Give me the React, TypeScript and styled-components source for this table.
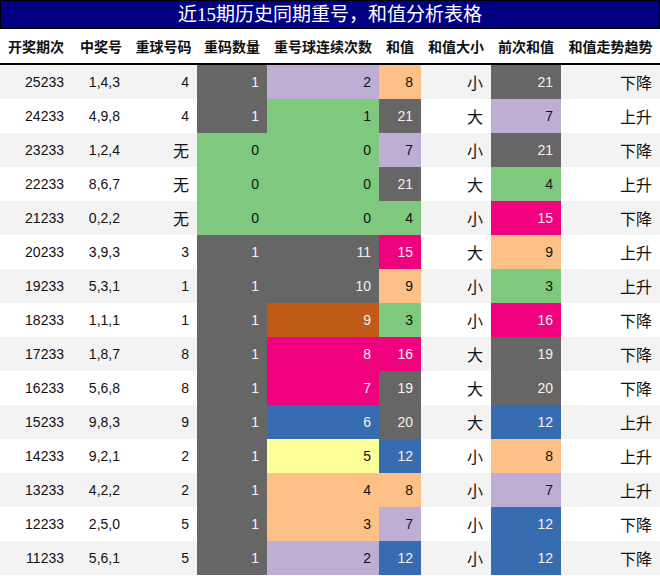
import styled, { createGlobalStyle } from "styled-components";

const GlobalStyle = createGlobalStyle`
  html, body {
    margin: 0;
    padding: 0;
    background: #ffffff;
  }
`;

const C = {
  gray: "#666666",
  green: "#7fc97f",
  purple: "#beaed4",
  orange: "#fdc086",
  yellow: "#ffff99",
  blue: "#386cb0",
  pink: "#f0027f",
  brown: "#bf5b17",
};

const darkColors = [C.gray, C.blue, C.pink, C.brown];

type Row = {
  issue: string;
  nums: string;
  repeat: string;
  count: [string, string];
  streak: [string, string];
  sum: [string, string];
  size: string;
  prev: [string, string];
  trend: string;
};

const rows: Row[] = [
  { issue: "25233", nums: "1,4,3", repeat: "4", count: ["1", C.gray], streak: ["2", C.purple], sum: ["8", C.orange], size: "小", prev: ["21", C.gray], trend: "下降" },
  { issue: "24233", nums: "4,9,8", repeat: "4", count: ["1", C.gray], streak: ["1", C.green], sum: ["21", C.gray], size: "大", prev: ["7", C.purple], trend: "上升" },
  { issue: "23233", nums: "1,2,4", repeat: "无", count: ["0", C.green], streak: ["0", C.green], sum: ["7", C.purple], size: "小", prev: ["21", C.gray], trend: "下降" },
  { issue: "22233", nums: "8,6,7", repeat: "无", count: ["0", C.green], streak: ["0", C.green], sum: ["21", C.gray], size: "大", prev: ["4", C.green], trend: "上升" },
  { issue: "21233", nums: "0,2,2", repeat: "无", count: ["0", C.green], streak: ["0", C.green], sum: ["4", C.green], size: "小", prev: ["15", C.pink], trend: "下降" },
  { issue: "20233", nums: "3,9,3", repeat: "3", count: ["1", C.gray], streak: ["11", C.gray], sum: ["15", C.pink], size: "大", prev: ["9", C.orange], trend: "上升" },
  { issue: "19233", nums: "5,3,1", repeat: "1", count: ["1", C.gray], streak: ["10", C.gray], sum: ["9", C.orange], size: "小", prev: ["3", C.green], trend: "上升" },
  { issue: "18233", nums: "1,1,1", repeat: "1", count: ["1", C.gray], streak: ["9", C.brown], sum: ["3", C.green], size: "小", prev: ["16", C.pink], trend: "下降" },
  { issue: "17233", nums: "1,8,7", repeat: "8", count: ["1", C.gray], streak: ["8", C.pink], sum: ["16", C.pink], size: "大", prev: ["19", C.gray], trend: "下降" },
  { issue: "16233", nums: "5,6,8", repeat: "8", count: ["1", C.gray], streak: ["7", C.pink], sum: ["19", C.gray], size: "大", prev: ["20", C.gray], trend: "下降" },
  { issue: "15233", nums: "9,8,3", repeat: "9", count: ["1", C.gray], streak: ["6", C.blue], sum: ["20", C.gray], size: "大", prev: ["12", C.blue], trend: "上升" },
  { issue: "14233", nums: "9,2,1", repeat: "2", count: ["1", C.gray], streak: ["5", C.yellow], sum: ["12", C.blue], size: "小", prev: ["8", C.orange], trend: "上升" },
  { issue: "13233", nums: "4,2,2", repeat: "2", count: ["1", C.gray], streak: ["4", C.orange], sum: ["8", C.orange], size: "小", prev: ["7", C.purple], trend: "上升" },
  { issue: "12233", nums: "2,5,0", repeat: "5", count: ["1", C.gray], streak: ["3", C.orange], sum: ["7", C.purple], size: "小", prev: ["12", C.blue], trend: "下降" },
  { issue: "11233", nums: "5,6,1", repeat: "5", count: ["1", C.gray], streak: ["2", C.purple], sum: ["12", C.blue], size: "小", prev: ["12", C.blue], trend: "下降" },
];

const headers = ["开奖期次", "中奖号", "重球号码", "重码数量", "重号球连续次数", "和值", "和值大小", "前次和值", "和值走势趋势"];
const widths = [72, 58, 67, 70, 112, 42, 70, 70, 99];

const isCjk = (s: string) => /[\u4e00-\u9fff]/.test(s);

const App = () => {
  return (
    <Wrap>
      <GlobalStyle />
      <Title>近15期历史同期重号，和值分析表格</Title>
      <Table>
        <colgroup>
          {widths.map((w, i) => (
            <col key={i} style={{ width: w }} />
          ))}
        </colgroup>
        <thead>
          <tr>
            {headers.map((h) => (
              <HeadCell key={h}>{h}</HeadCell>
            ))}
          </tr>
        </thead>
        <tbody>
          {rows.map((r, i) => (
            <BodyRow key={r.issue} $striped={i % 2 === 0}>
              <Cell>{r.issue}</Cell>
              <Cell $pad={10}>{r.nums}</Cell>
              <Cell $cjk={isCjk(r.repeat)}>{r.repeat}</Cell>
              <Cell $bg={r.count[1]}>{r.count[0]}</Cell>
              <Cell $bg={r.streak[1]}>{r.streak[0]}</Cell>
              <Cell $bg={r.sum[1]}>{r.sum[0]}</Cell>
              <Cell $cjk>{r.size}</Cell>
              <Cell $bg={r.prev[1]}>{r.prev[0]}</Cell>
              <Cell $cjk>{r.trend}</Cell>
            </BodyRow>
          ))}
        </tbody>
      </Table>
    </Wrap>
  );
};

const Wrap = styled.div`
  width: 660px;
  height: 576px;
  overflow: hidden;
  background: #ffffff;
`;

const Title = styled.div`
  height: 27px;
  background: #000080;
  border: 1px solid #000000;
  color: #ffffff;
  font-family: "Liberation Serif", "Noto Sans CJK SC", serif;
  font-size: 19px;
  line-height: 27px;
  text-align: center;
`;

const Table = styled.table`
  width: 660px;
  table-layout: fixed;
  border-collapse: collapse;
  border-spacing: 0;
`;

const HeadCell = styled.th`
  height: 34px;
  padding: 0;
  border-bottom: 2px solid #000000;
  font-family: "Liberation Sans", "Noto Sans CJK SC", sans-serif;
  font-size: 14px;
  font-weight: bold;
  color: #111111;
  text-align: center;
  white-space: nowrap;
`;

const BodyRow = styled.tr<{ $striped: boolean }>`
  background: ${(p) => (p.$striped ? "#f3f3f3" : "#ffffff")};
`;

const Cell = styled.td<{ $bg?: string; $pad?: number; $cjk?: boolean }>`
  height: 34px;
  padding: 0 ${(p) => p.$pad ?? 8}px 0 0;
  background: ${(p) => p.$bg ?? "transparent"};
  color: ${(p) => (p.$bg && darkColors.includes(p.$bg) ? "#f2f2f2" : "#111111")};
  font-family: "Liberation Sans", "Noto Sans CJK SC", sans-serif;
  font-size: ${(p) => (p.$cjk ? 16 : 14)}px;
  text-align: right;
  vertical-align: middle;
  white-space: nowrap;
`;

export default App;
